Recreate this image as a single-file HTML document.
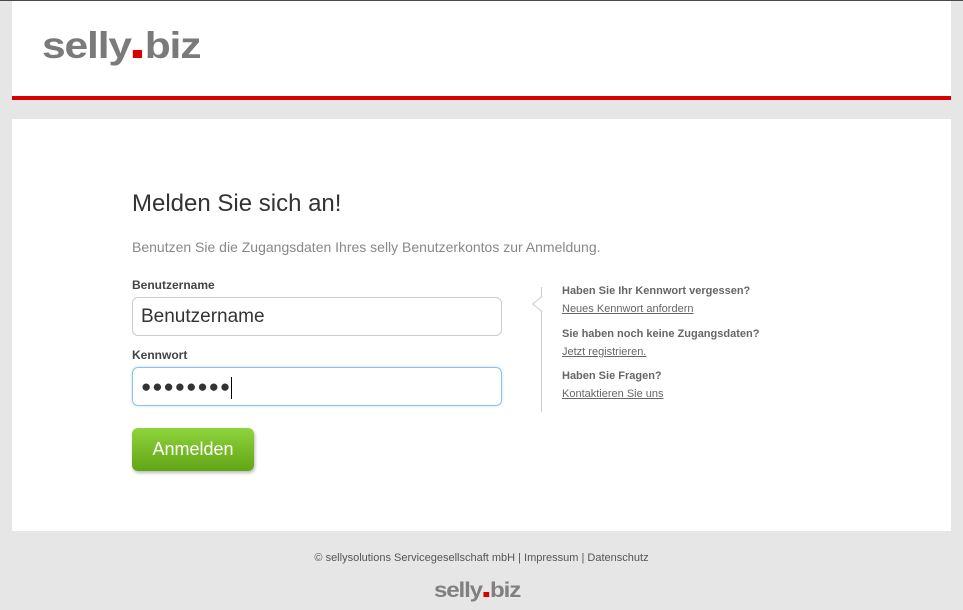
<!DOCTYPE html>
<html><head><meta charset="utf-8"><style>
body{margin:0;width:963px;height:610px;background:#e6e6e6;font-family:"Liberation Sans",Arial,sans-serif;position:relative;overflow:hidden}
.top{position:absolute;left:0;top:0;width:963px;height:1px;background:#4a4a4a}
.hdr{position:absolute;left:12px;top:1px;width:939px;height:95px;background:#fff;border-bottom:4px solid #d80000}
.logo{position:absolute;font-weight:bold;color:#7a7a7a;letter-spacing:-1px;transform-origin:0 0;white-space:nowrap}
.logo i{display:inline-block;background:#d80000;vertical-align:0}
.main{position:absolute;left:12px;top:119px;width:939px;height:412px;background:#fff}
h1{position:absolute;left:120px;top:71px;margin:0;font-weight:normal;font-size:24px;color:#333}
.sub{position:absolute;left:120px;top:120px;font-size:14px;color:#888}
.lbl{position:absolute;left:120px;font-size:12px;font-weight:bold;color:#444}
.inp{position:absolute;left:120px;height:37px;border:1px solid #ccc;border-radius:6px;box-sizing:content-box;font-size:19px;color:#333;line-height:37px;padding-left:8px;width:361px}
.btn{position:absolute;left:120px;top:309px;width:122px;height:43px;border-radius:6px;background:linear-gradient(#8ed43c,#62a516);color:#fff;font-size:18px;text-align:center;line-height:43px;box-shadow:1px 2px 3px #bbb}
.side{position:absolute;left:550px;font-size:11px;color:#666;line-height:18px}
.side b{display:block}
.side u{color:#666}
.foot{position:absolute;top:552px;width:963px;text-align:center;font-size:11px;color:#555}
</style></head><body>
<div class="top"></div>
<div class="hdr"><div class="logo" style="left:30px;top:24px;font-size:37px;transform:scaleX(1.15)">selly<i style="width:8px;height:8px;margin:0 2px"></i>biz</div></div>
<div class="main">
<h1>Melden Sie sich an!</h1>
<div class="sub">Benutzen Sie die Zugangsdaten Ihres selly Benutzerkontos zur Anmeldung.</div>
<div class="lbl" style="top:159px">Benutzername</div>
<div class="inp" style="top:178px;width:360px">Benutzername</div>
<div class="lbl" style="top:229px">Kennwort</div>
<div class="inp" style="top:248px;width:360px;border-color:#8ec0ee;box-shadow:0 0 3px #bfe0ff;font-size:17px;letter-spacing:1px;color:#333">●●●●●●●●<span style="display:inline-block;width:1px;height:22px;background:#000;vertical-align:middle"></span></div>
<div class="btn">Anmelden</div>
<svg style="position:absolute;left:519px;top:168px" width="14" height="125"><path d="M10.5 0V10L1.5 17L10.5 24V125" fill="none" stroke="#ccc"/></svg>
<div class="side" style="top:163px"><b>Haben Sie Ihr Kennwort vergessen?</b><u>Neues Kennwort anfordern</u></div>
<div class="side" style="top:206px"><b>Sie haben noch keine Zugangsdaten?</b><u>Jetzt registrieren.</u></div>
<div class="side" style="top:248px"><b>Haben Sie Fragen?</b><u>Kontaktieren Sie uns</u></div>
</div>
<div class="foot">© sellysolutions Servicegesellschaft mbH | Impressum | Datenschutz</div>
<div class="logo" style="left:434px;top:579px;font-size:21px;color:#808080;transform:scaleX(1.15)">selly<i style="width:5px;height:5px;margin:0 1px"></i>biz</div>
</body></html>
